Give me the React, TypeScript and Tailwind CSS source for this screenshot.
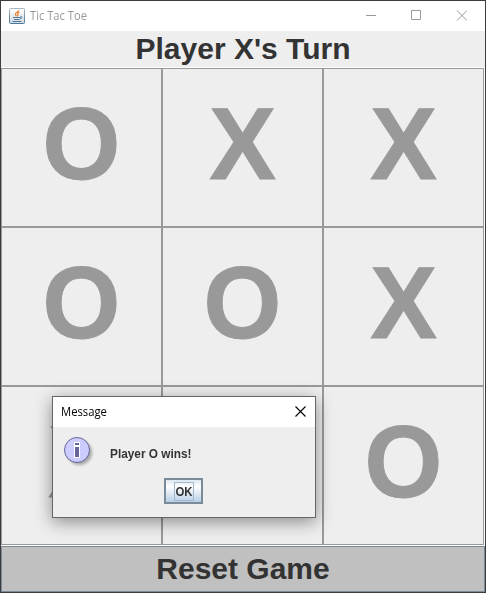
import React from "react";

const cells: string[] = ["O", "X", "X", "O", "O", "X", "X", "", "O"];

function JavaIcon() {
  return (
    <svg width="16" height="16" viewBox="0 0 16 16" fill="none">
      <defs>
        <linearGradient id="tile" x1="0" y1="0" x2="0" y2="1">
          <stop offset="0" stopColor="#ffffff" />
          <stop offset="1" stopColor="#cfd8e0" />
        </linearGradient>
        <linearGradient id="edge" x1="0" y1="0" x2="0" y2="1">
          <stop offset="0" stopColor="#a9b4bd" />
          <stop offset="1" stopColor="#4c7899" />
        </linearGradient>
      </defs>
      <rect x=".5" y=".5" width="15" height="15" rx="1" fill="url(#tile)" stroke="url(#edge)" />
      <path d="M9.8 2.2C10 4 6 4.5 6.4 6.3c.2.8 1 1.2 1.1 2M10.6 4.5C8.8 5 8.2 5.8 8.8 6.6c.4.6.3 1.2-.3 1.8" stroke="#e8802e" strokeWidth="1.2" />
      <path d="M4 9.5h7.5M5 11.5h5.5M3.5 13.5h9M11.5 8.5c2-.4 2 1.8-.5 2.2" stroke="#527b9b" strokeWidth="1" />
    </svg>
  );
}

function InfoIcon() {
  return (
    <svg width="32" height="32" viewBox="0 0 32 32">
      <defs>
        <filter id="soft" x="-30%" y="-30%" width="160%" height="160%">
          <feGaussianBlur stdDeviation="1.5" />
        </filter>
      </defs>
      <circle cx="15.5" cy="15.5" r="12.5" fill="#000" opacity=".3" filter="url(#soft)" />
      <circle cx="13" cy="13" r="12.5" fill="#ccccff" stroke="#666699" />
      <path d="M10 5h6v16h-6z" fill="#fff" />
      <path d="M11 6h4v2h-4zM11 10h4v10h-4z" fill="#666699" />
    </svg>
  );
}

function MessageDialog() {
  return (
    <div className="absolute left-[51px] top-[395px] flex h-[122px] w-[264px] flex-col border border-[#666] bg-[#eee] shadow-[0_4px_16px_rgba(0,0,0,0.42)]">
      <div className="flex h-[30px] shrink-0 items-center justify-between bg-white pl-2 pr-[9px]">
        <span className="origin-left scale-x-[0.94] font-['Open_Sans',sans-serif] text-[12px] text-black">Message</span>
        <svg className="-mt-[2px]" width="11" height="11" viewBox="0 0 11 11" stroke="#000" strokeWidth="1.1">
          <path d="M.5.5l10 10M10.5.5l-10 10" />
        </svg>
      </div>
      <div className="flex h-[51px] shrink-0 pl-[11px] pt-[10px]">
        <InfoIcon />
        <span className="ml-[14px] mt-[10px] origin-left scale-x-[0.985] text-[12px] font-bold leading-[14px] text-[#333]">Player O wins!</span>
      </div>
      <button className="ml-[111px] flex h-[26px] w-[39px] shrink-0 items-center justify-center border-2 border-[#7a8a99] bg-linear-to-b from-[#dde8f3] via-white via-30% to-[#b8cfe5]">
        <span className="flex h-[19px] w-[20px] items-center justify-center border border-[#a3b8cc] pt-px text-[12px] font-bold leading-none text-[#333]">
          <span className="scale-x-[0.95]">OK</span>
        </span>
      </button>
    </div>
  );
}

export default function App() {
  return (
    <div className="relative flex h-[593px] w-[486px] flex-col overflow-hidden border border-[#3c3c3e] bg-white font-['Liberation_Sans',Arial,sans-serif]">
      <header className="flex h-[30px] shrink-0 items-center bg-white pl-2">
        <JavaIcon />
        <span className="ml-[5px] origin-left scale-x-[0.93] font-['Open_Sans',sans-serif] text-[12px] text-[#999]">Tic Tac Toe</span>
        <svg className="-mt-[2px] ml-auto mr-[18px]" width="101" height="11" viewBox="0 0 101 11" fill="none" stroke="#999">
          <path d="M0 5.5h10" />
          <path d="M45.5.5h9v9h-9z" />
          <path d="M91 .5l10 10M101 .5l-10 10" />
        </svg>
      </header>
      <div className="flex h-[36px] shrink-0 items-center justify-center bg-[#eee]">
        <span className="whitespace-nowrap text-[30px] font-bold leading-none text-[#333]">Player X's Turn</span>
      </div>
      <main className="mt-px grid h-[477px] w-[483px] shrink-0 grid-cols-3 grid-rows-3">
        {cells.map((mark, i) => (
          <div key={i} className="flex items-center justify-center overflow-hidden border border-[#999] bg-[#eee] pb-[10px]">
            <span className="scale-y-[1.02] text-[100px] font-bold leading-none text-[#999] [-webkit-text-stroke:1px_#999]">{mark}</span>
          </div>
        ))}
      </main>
      <button className="mt-px flex h-[46px] w-full shrink-0 items-center justify-center border border-[#7a8a99] bg-[#c0c0c0]">
        <span className="text-[30px] font-bold leading-none text-[#333]">Reset Game</span>
      </button>
      <MessageDialog />
    </div>
  );
}
